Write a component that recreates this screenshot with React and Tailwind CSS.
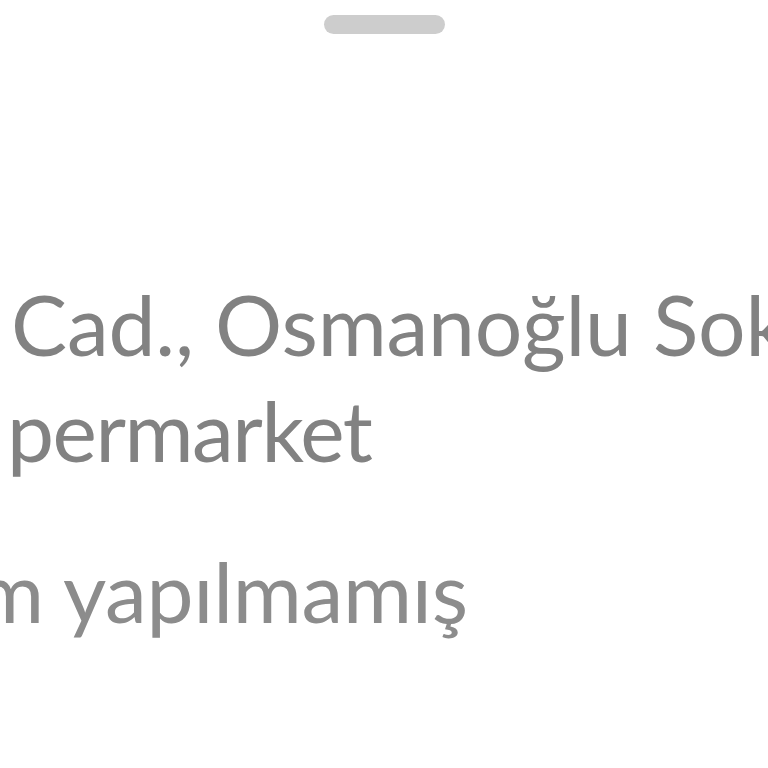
export default function App() {
  return (
    <div className="w-[768px] h-[768px] bg-white overflow-hidden relative" style={{ fontFamily: "Lato, 'Open Sans', sans-serif" }}>
      <div className="flex justify-center pt-[15px]">
        <div className="w-[121px] h-[19px] rounded-full bg-[#cdcdcd]" />
      </div>
      <div className="mt-[237px] text-[84px] leading-[106px] text-[#828282] whitespace-nowrap">
        <div className="ml-[11px] tracking-[-0.2px]">Cad., Osmanoğlu Sokak</div>
        <div className="ml-[7px] tracking-[-1.5px]">permarket</div>
      </div>
      <div className="mt-[55px] text-[84px] leading-[106px] text-[#8c8c8c] whitespace-nowrap ml-[-25px] tracking-[-0.3px]">
        m yapılmamış
      </div>
    </div>
  );
}
